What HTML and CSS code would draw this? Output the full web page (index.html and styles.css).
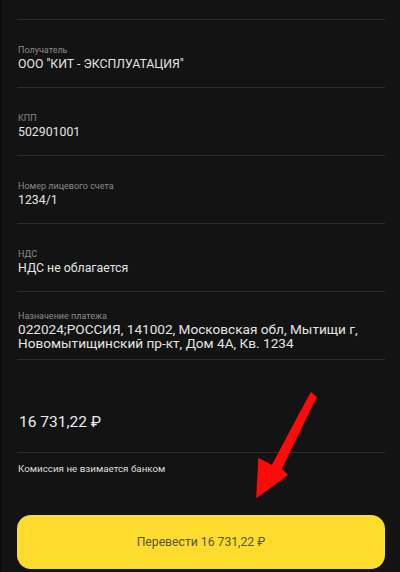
FILE: index.html
```html
<!DOCTYPE html>
<html lang="ru">
<head>
<meta charset="utf-8">
<link rel="stylesheet" href="styles.css">
</head>
<body>
<div class="screen">
  <div class="details">
    <div class="row">
      <div class="label">Получатель</div>
      <div class="value">ООО "КИТ - ЭКСПЛУАТАЦИЯ"</div>
    </div>
    <div class="row">
      <div class="label">КПП</div>
      <div class="value">502901001</div>
    </div>
    <div class="row">
      <div class="label">Номер лицевого счета</div>
      <div class="value">1234/1</div>
    </div>
    <div class="row">
      <div class="label">НДС</div>
      <div class="value">НДС не облагается</div>
    </div>
    <div class="row row-multi">
      <div class="label">Назначение платежа</div>
      <div class="value">022024;РОССИЯ, 141002, Московская обл, Мытищи г, Новомытищинский пр-кт, Дом 4А, Кв. 1234</div>
    </div>
    <div class="amount">16 731,22 ₽</div>
  </div>
  <div class="fee">Комиссия не взимается банком</div>
  <button class="pay">Перевести 16 731,22 ₽</button>
  <svg class="arrow" width="400" height="572" viewBox="0 0 400 572">
    <polygon points="311,393 316,397 281,469 287,475 257,497 259,459 272,466" fill="#ff0a0a" stroke="#ff0a0a" stroke-width="1.5" stroke-linejoin="round"/>
  </svg>
</div>
</body>
</html>
```
FILE: styles.css
```css
html, body {
  margin: 0;
  padding: 0;
  background: #131313;
}
body {
  width: 400px;
  height: 572px;
  overflow: hidden;
  font-family: Roboto, "Noto Sans", sans-serif;
}
.screen {
  position: relative;
  height: 572px;
  box-sizing: border-box;
  padding: 19px 15px 0 17px;
  border-left: 2px solid #0c0c0c;
}
.details {
  border-top: 1px solid #2c2c2c;
  margin-left: -2px;
}
.row {
  padding: 24px 0 15px 1px;
  border-bottom: 1px solid #2c2c2c;
}
.row-multi {
  padding-top: 18px;
  padding-bottom: 9px;
}
.label {
  font-size: 9px;
  line-height: 12px;
  color: #8a8a8a;
}
.value {
  font-size: 12.3px;
  line-height: 16px;
  color: #e4e4e4;
}
.row-multi .value {
  line-height: 14px;
  font-size: 13.6px;
}
.amount {
  padding: 51px 0 19px 2px;
  font-size: 15.5px;
  line-height: 22px;
  color: #ececec;
  border-bottom: 1px solid #2c2c2c;
}
.fee {
  margin: 9px 0 0 -1px;
  font-size: 9.8px;
  line-height: 14px;
  color: #dedede;
}
.pay {
  display: block;
  width: 368px;
  height: 54px;
  margin: 39px 0 0 -2px;
  border: none;
  border-radius: 14px;
  background: #fddc2e;
  color: #5a5530;
  font-family: inherit;
  font-size: 12.2px;
}
.arrow {
  position: absolute;
  left: -2px;
  top: 0;
  pointer-events: none;
}
```
